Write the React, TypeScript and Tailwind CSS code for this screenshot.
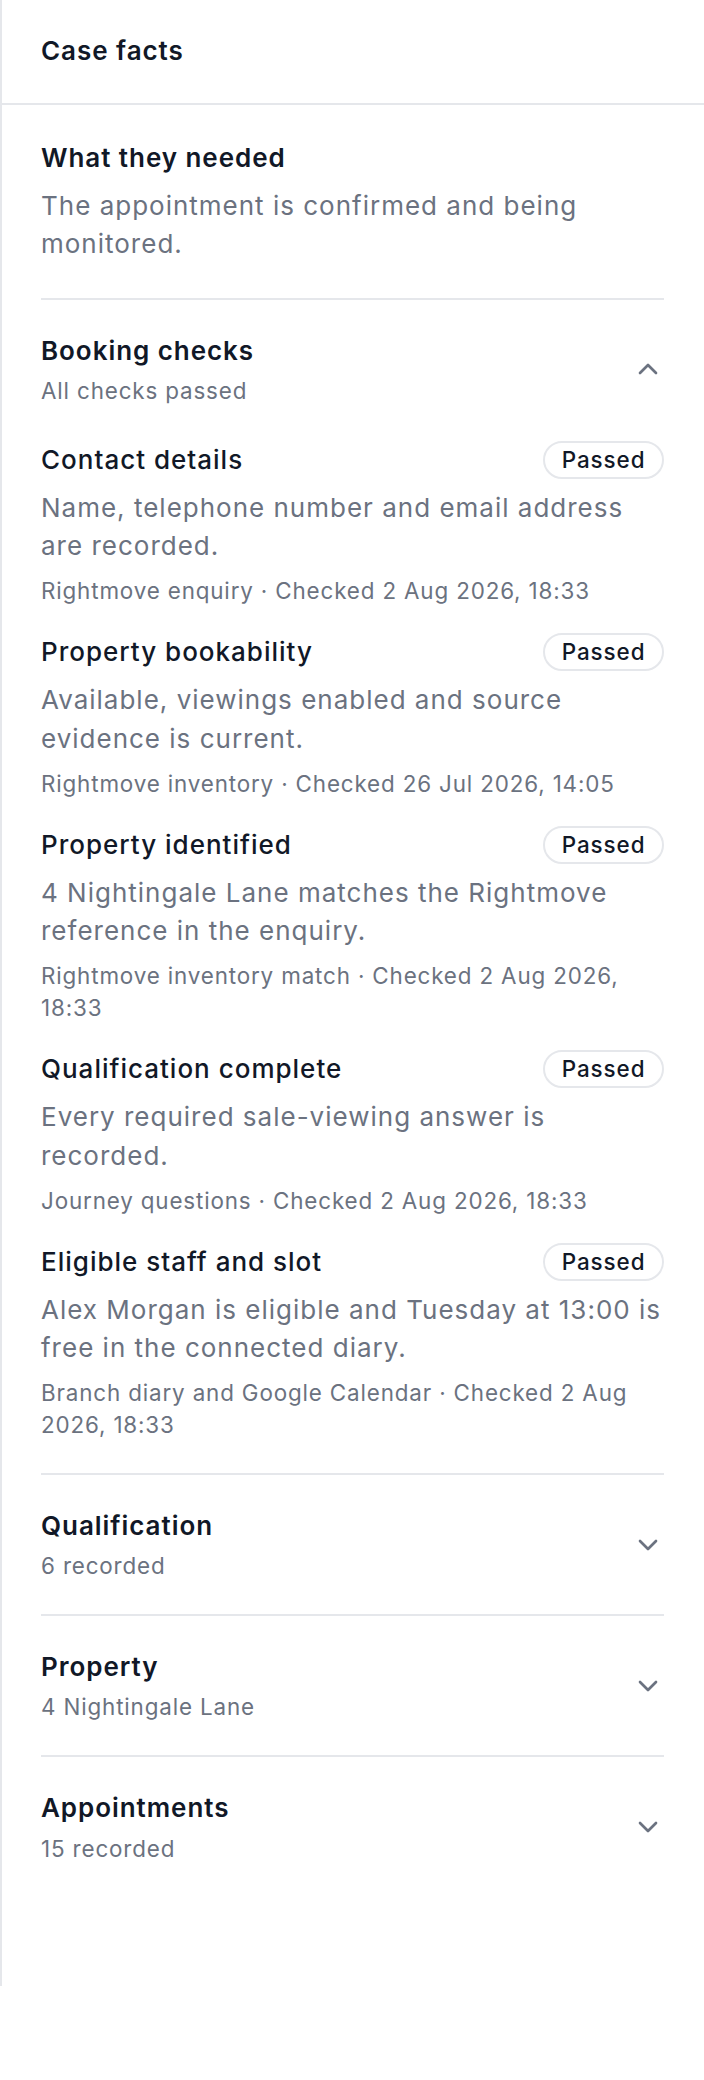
import { ChevronDown, ChevronUp } from "lucide-react";

type Check = {
  title: string;
  detail: string;
  source: string;
};

const checks: Check[] = [
  {
    title: "Contact details",
    detail: "Name, telephone number and email address are recorded.",
    source: "Rightmove enquiry · Checked 2 Aug 2026, 18:33",
  },
  {
    title: "Property bookability",
    detail: "Available, viewings enabled and source evidence is current.",
    source: "Rightmove inventory · Checked 26 Jul 2026, 14:05",
  },
  {
    title: "Property identified",
    detail: "4 Nightingale Lane matches the Rightmove reference in the enquiry.",
    source: "Rightmove inventory match · Checked 2 Aug 2026, 18:33",
  },
  {
    title: "Qualification complete",
    detail: "Every required sale-viewing answer is recorded.",
    source: "Journey questions · Checked 2 Aug 2026, 18:33",
  },
  {
    title: "Eligible staff and slot",
    detail: "Alex Morgan is eligible and Tuesday at 13:00 is free in the connected diary.",
    source: "Branch diary and Google Calendar · Checked 2 Aug 2026, 18:33",
  },
];

const collapsed = [
  { title: "Qualification", summary: "6 recorded" },
  { title: "Property", summary: "4 Nightingale Lane" },
  { title: "Appointments", summary: "15 recorded" },
];

function SectionHeader({ title, summary, open }: { title: string; summary: string; open?: boolean }) {
  return (
    <div className="flex items-center justify-between gap-4">
      <div>
        <h3 className="text-[26px] font-semibold leading-[38.4px] tracking-[0.95px] text-[#111827]">{title}</h3>
        <p className="mt-[4.8px] text-[22.4px] leading-[32px] tracking-[0.85px] text-[#6b7280]">{summary}</p>
      </div>
      {open ? (
        <ChevronUp className="size-[32px] shrink-0 text-[#6b7280]" strokeWidth={2} />
      ) : (
        <ChevronDown className="size-[32px] shrink-0 text-[#6b7280]" strokeWidth={2} />
      )}
    </div>
  );
}

export default function App() {
  return (
    <div className="min-h-[2080px] bg-white font-['Inter',sans-serif] antialiased">
      <aside className="h-[1986px] w-full border-l-2 border-[#e5e7eb] bg-white">
        <header className="flex h-[105px] items-center border-b-2 border-[#e5e7eb] pl-[39px] pr-[40px]">
          <h2 className="text-[26px] font-semibold leading-[38.4px] tracking-[0.95px] text-[#111827]">Case facts</h2>
        </header>

        <div className="divide-y-2 divide-[#e5e7eb] pl-[39px] pr-[40px]">
          <section className="pb-[34px] pt-[34px]">
            <h3 className="text-[26px] font-semibold leading-[38.4px] tracking-[0.95px] text-[#111827]">
              What they needed
            </h3>
            <p className="mt-[9.6px] text-[26px] leading-[38.4px] tracking-[1px] text-[#6b7280]">
              The appointment is confirmed and being monitored.
            </p>
          </section>

          <section className="pb-[32px] pt-[32px]">
            <SectionHeader title="Booking checks" summary="All checks passed" open />
            <ul className="mt-[34px] flex flex-col gap-[26px]">
              {checks.map((check) => (
                <li key={check.title}>
                  <div className="flex items-start justify-between gap-4">
                    <p className="text-[26px] font-medium leading-[38.4px] tracking-[1px] text-[#111827]">
                      {check.title}
                    </p>
                    <span className="flex h-[38px] shrink-0 items-center rounded-full border-2 border-[#e5e7eb] px-[16.5px] text-[22.4px] font-medium leading-[32px] tracking-[0.95px] text-[#111827]">
                      Passed
                    </span>
                  </div>
                  <p className="mt-[9.6px] text-[26px] leading-[38.4px] tracking-[1px] text-[#6b7280]">
                    {check.detail}
                  </p>
                  <p className="mt-[9.6px] text-[22.4px] leading-[32px] tracking-[0.85px] text-[#6b7280]">
                    {check.source}
                  </p>
                </li>
              ))}
            </ul>
          </section>

          {collapsed.map((item) => (
            <section key={item.title} className="pb-[32px] pt-[32px]">
              <SectionHeader title={item.title} summary={item.summary} />
            </section>
          ))}
        </div>
      </aside>
    </div>
  );
}
